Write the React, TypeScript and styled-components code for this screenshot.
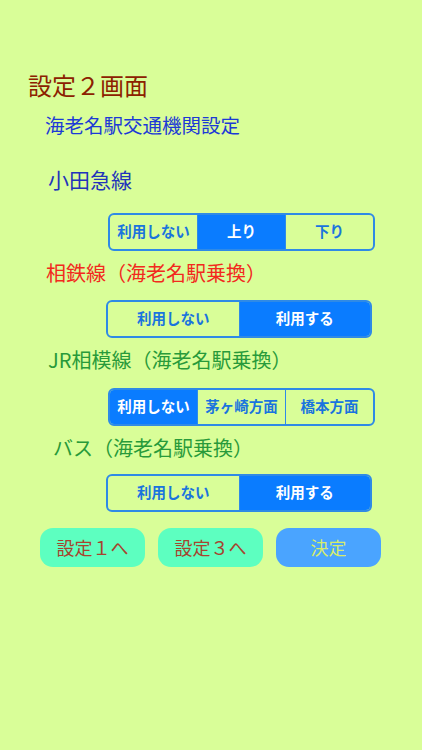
import React, { useState } from "react";
import styled, { createGlobalStyle } from "styled-components";

const GlobalStyle = createGlobalStyle`
  html, body { margin: 0; padding: 0; }
  body {
    background: #d9fe98;
    font-family: "Noto Sans CJK JP", "Noto Sans", sans-serif;
  }
`;

const Screen = styled.div`
  width: 422px;
  height: 750px;
  background: #d9fe98;
  display: flex;
  flex-direction: column;
  align-items: flex-start;
  box-sizing: border-box;
`;

const Title = styled.div`
  margin: 73px 0 0 28px;
  font-size: 24px;
  line-height: 1;
  color: #8c2100;
  letter-spacing: 0;
`;

const Heading = styled.div<{ $left: number; $top: number; $color: string; $size?: number }>`
  margin: ${(p) => p.$top}px 0 0 ${(p) => p.$left}px;
  font-size: ${(p) => p.$size ?? 20}px;
  line-height: 1;
  color: ${(p) => p.$color};
  white-space: nowrap;
`;

const Segmented = styled.div<{ $left: number; $top: number; $width: number }>`
  margin: ${(p) => p.$top}px 0 0 ${(p) => p.$left}px;
  width: ${(p) => p.$width}px;
  height: 38px;
  box-sizing: border-box;
  border: 2px solid #2f8ae6;
  border-radius: 6px;
  overflow: hidden;
  display: flex;
`;

const Segment = styled.button<{ $active: boolean }>`
  flex: 1;
  margin: 0;
  padding: 0;
  border: none;
  border-left: 1.5px solid #2f8ae6;
  &:first-child { border-left: none; }
  background: ${(p) => (p.$active ? "#0a7cff" : "transparent")};
  color: ${(p) => (p.$active ? "#ffffff" : "#1a74de")};
  font-family: "Noto Sans CJK JP", "Noto Sans", sans-serif;
  font-size: 14.5px;
  font-weight: 700;
  line-height: 1;
  cursor: pointer;
  display: flex;
  align-items: center;
  justify-content: center;
  white-space: nowrap;
`;

const ButtonRow = styled.div`
  margin: 16px 0 0 40px;
  display: flex;
  gap: 13px;
`;

const ActionButton = styled.button<{ $primary?: boolean }>`
  width: 105px;
  height: 39px;
  margin: 0;
  padding: 0;
  border: none;
  border-radius: 13px;
  background: ${(p) => (p.$primary ? "#4aa4ff" : "#5dffc0")};
  color: ${(p) => (p.$primary ? "#d6ec6c" : "#a6442e")};
  font-family: "Noto Sans CJK JP", "Noto Sans", sans-serif;
  font-size: 18px;
  font-weight: 400;
  line-height: 1;
  cursor: pointer;
  display: flex;
  align-items: center;
  justify-content: center;
`;

type SegProps = {
  options: string[];
  value: number;
  onChange: (i: number) => void;
  left: number;
  top: number;
  width: number;
};

const SegmentedControl = ({ options, value, onChange, left, top, width }: SegProps) => (
  <Segmented $left={left} $top={top} $width={width}>
    {options.map((o, i) => (
      <Segment key={o} $active={i === value} onClick={() => onChange(i)}>
        {o}
      </Segment>
    ))}
  </Segmented>
);

export default function App() {
  const [odakyu, setOdakyu] = useState(1);
  const [sotetsu, setSotetsu] = useState(1);
  const [jr, setJr] = useState(0);
  const [bus, setBus] = useState(1);

  return (
    <>
      <GlobalStyle />
      <Screen>
        <Title>設定２画面</Title>
        <Heading $left={45} $top={18} $color="#1c3ad6" $size={19.5}>
          海老名駅交通機関設定
        </Heading>
        <Heading $left={48} $top={34} $color="#2233bb" $size={21}>
          小田急線
        </Heading>
        <SegmentedControl
          options={["利用しない", "上り", "下り"]}
          value={odakyu}
          onChange={setOdakyu}
          left={108}
          top={23}
          width={267}
        />
        <Heading $left={46} $top={12.5} $color="#f2291d">
          相鉄線（海老名駅乗換）
        </Heading>
        <SegmentedControl
          options={["利用しない", "利用する"]}
          value={sotetsu}
          onChange={setSotetsu}
          left={106}
          top={16.5}
          width={266}
        />
        <Heading $left={48} $top={12} $color="#289a3a">
          JR相模線（海老名駅乗換）
        </Heading>
        <SegmentedControl
          options={["利用しない", "茅ヶ崎方面", "橋本方面"]}
          value={jr}
          onChange={setJr}
          left={108}
          top={18}
          width={267}
        />
        <Heading $left={53} $top={12} $color="#289a3a">
          バス（海老名駅乗換）
        </Heading>
        <SegmentedControl
          options={["利用しない", "利用する"]}
          value={bus}
          onChange={setBus}
          left={106}
          top={16}
          width={266}
        />
        <ButtonRow>
          <ActionButton>設定１へ</ActionButton>
          <ActionButton>設定３へ</ActionButton>
          <ActionButton $primary>決定</ActionButton>
        </ButtonRow>
      </Screen>
    </>
  );
}
